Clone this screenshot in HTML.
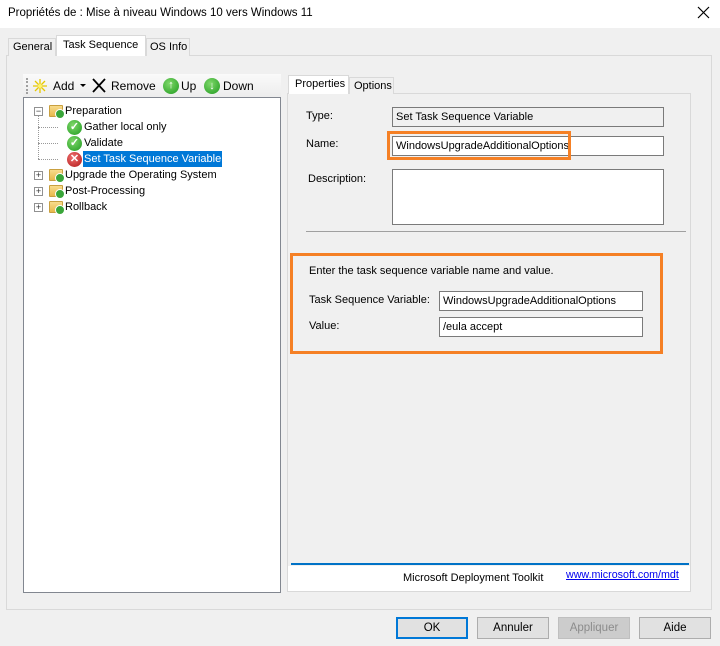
<!DOCTYPE html>
<html><head><meta charset="utf-8"><style>
*{margin:0;padding:0;box-sizing:border-box}
body{width:720px;height:646px;background:#f0f0f0;font-family:"Liberation Sans",sans-serif;font-size:11px;color:#000;position:relative;overflow:hidden}
.a{position:absolute}
.inp{position:absolute;background:#fff;border:1px solid #7a7a7a;padding:3px 0 0 3px;font-size:11px;white-space:nowrap}
.btn{position:absolute;top:617px;width:72px;height:22px;background:#e1e1e1;border:1px solid #adadad;text-align:center;line-height:20px;font-size:11.5px}
.t{position:absolute;white-space:nowrap}
.fold{position:absolute;width:14px;height:12px;background:linear-gradient(#f8dc8c,#e8b84c);border:1px solid #c9a040;border-radius:1px}
.fold:after{content:"";position:absolute;right:-3px;bottom:-3px;width:8px;height:8px;border-radius:50%;background:#3aa63a;border:1px solid #fff}
.pm{position:absolute;width:9px;height:9px;border:1px solid #919191;background:#fff;font-size:9px;line-height:7px;text-align:center;color:#333}
.ok{position:absolute;width:15px;height:15px;border-radius:50%;background:radial-gradient(circle at 40% 35%,#7fd86a,#1f9a1f);color:#fff;font-size:11px;line-height:15px;text-align:center;font-weight:bold}
</style></head><body>
<div class="a" style="left:0;top:0;width:720px;height:28px;background:#fff"></div>
<div class="t" style="left:8px;top:7px;font-size:11.5px">Propriétés de : Mise à niveau Windows 10 vers Windows 11</div>
<svg class="a" style="left:697px;top:6px" width="14" height="14"><path d="M1 1L12 12M12 1L1 12" stroke="#000" stroke-width="1.2"/></svg>

<div class="a" style="left:6px;top:55px;width:706px;height:555px;border:1px solid #d9d9d9;background:#f0f0f0"></div>
<div class="a" style="left:8px;top:38px;width:48px;height:18px;border:1px solid #d9d9d9;border-bottom:none;background:#f0f0f0"></div>
<div class="t" style="left:13px;top:41px">General</div>
<div class="a" style="left:56px;top:35px;width:90px;height:21px;border:1px solid #d9d9d9;border-bottom:none;background:#fff"></div>
<div class="t" style="left:63px;top:39px">Task Sequence</div>
<div class="a" style="left:146px;top:38px;width:44px;height:18px;border:1px solid #d9d9d9;border-bottom:none;background:#f0f0f0"></div>
<div class="t" style="left:150px;top:41px">OS Info</div>
<div class="a" style="left:7px;top:56px;width:704px;height:553px;background:#f0f0f0"></div>

<div class="a" style="left:23px;top:74px;width:258px;height:24px;background:linear-gradient(#fafafa,#ececec)"></div>
<div class="a" style="left:26px;top:78px;width:2px;height:16px;border-left:2px dotted #a0a0a0"></div>
<svg class="a" style="left:32px;top:78px" width="16" height="16"><path d="M8 1V15M1 8H15M3 3L13 13M13 3L3 13" stroke="#e6c800" stroke-width="1.3"/><circle cx="8" cy="8" r="2" fill="#fff36b"/></svg>
<div class="t" style="left:53px;top:79px;font-size:12px">Add</div>
<svg class="a" style="left:80px;top:84px" width="6" height="4"><path d="M0 0H6L3 3z" fill="#000"/></svg>
<svg class="a" style="left:92px;top:78px" width="14" height="15"><path d="M1 1L13 14M13 1L1 14" stroke="#000" stroke-width="1.8"/></svg>
<div class="t" style="left:111px;top:79px;font-size:12px">Remove</div>
<div class="ok" style="left:163px;top:78px;width:16px;height:16px;line-height:15px">↑</div>
<div class="t" style="left:181px;top:79px;font-size:12px">Up</div>
<div class="ok" style="left:204px;top:78px;width:16px;height:16px;line-height:16px">↓</div>
<div class="t" style="left:223px;top:79px;font-size:12px">Down</div>

<div class="a" style="left:23px;top:97px;width:258px;height:496px;background:#fff;border:1px solid #828790"></div>
<div class="a" style="left:38px;top:116px;height:43px;border-left:1px dotted #999"></div>
<div class="a" style="left:38px;top:127px;width:20px;border-top:1px dotted #999"></div>
<div class="a" style="left:38px;top:143px;width:20px;border-top:1px dotted #999"></div>
<div class="a" style="left:38px;top:159px;width:20px;border-top:1px dotted #999"></div>
<div class="pm" style="left:34px;top:107px">−</div>
<div class="fold" style="left:49px;top:105px"></div>
<div class="t" style="left:65px;top:105px">Preparation</div>
<div class="ok" style="left:67px;top:120px">✓</div>
<div class="t" style="left:84px;top:121px">Gather local only</div>
<div class="ok" style="left:67px;top:136px">✓</div>
<div class="t" style="left:84px;top:137px">Validate</div>
<div class="ok" style="left:67px;top:152px;background:radial-gradient(circle at 40% 35%,#f07070,#b01818)">✕</div>
<div class="a" style="left:83px;top:151px;width:139px;height:16px;background:#0078d7"></div>
<div class="t" style="left:84px;top:153px;color:#fff">Set Task Sequence Variable</div>
<div class="pm" style="left:34px;top:171px">+</div>
<div class="fold" style="left:49px;top:169px"></div>
<div class="t" style="left:65px;top:169px">Upgrade the Operating System</div>
<div class="pm" style="left:34px;top:187px">+</div>
<div class="fold" style="left:49px;top:185px"></div>
<div class="t" style="left:65px;top:185px">Post-Processing</div>
<div class="pm" style="left:34px;top:203px">+</div>
<div class="fold" style="left:49px;top:201px"></div>
<div class="t" style="left:65px;top:201px">Rollback</div>

<div class="a" style="left:287px;top:93px;width:404px;height:499px;border:1px solid #d9d9d9;background:#f0f0f0"></div>
<div class="a" style="left:288px;top:566px;width:402px;height:25px;background:#fff"></div>
<div class="a" style="left:291px;top:563px;width:398px;height:2px;background:#0072c6"></div>
<div class="t" style="left:403px;top:572px">Microsoft Deployment Toolkit</div>
<div class="t" style="left:566px;top:569px;color:#0000ee;text-decoration:underline;font-size:10.7px">www.microsoft.com/mdt</div>
<div class="a" style="left:288px;top:75px;width:61px;height:19px;border:1px solid #d9d9d9;border-bottom:none;background:#fff"></div>
<div class="t" style="left:295px;top:78px">Properties</div>
<div class="a" style="left:349px;top:77px;width:45px;height:17px;border:1px solid #d9d9d9;border-bottom:none;background:#f0f0f0"></div>
<div class="t" style="left:354px;top:80px">Options</div>

<div class="t" style="left:306px;top:110px">Type:</div>
<div class="inp" style="left:392px;top:107px;width:272px;height:20px;background:#f0f0f0">Set Task Sequence Variable</div>
<div class="t" style="left:306px;top:138px">Name:</div>
<div class="inp" style="left:392px;top:136px;width:272px;height:20px">WindowsUpgradeAdditionalOptions</div>
<div class="a" style="left:387px;top:131px;width:184px;height:29px;border:3px solid #f58025"></div>
<div class="t" style="left:308px;top:173px">Description:</div>
<div class="inp" style="left:392px;top:169px;width:272px;height:56px"></div>
<div class="a" style="left:306px;top:231px;width:380px;border-top:1px solid #a0a0a0"></div>

<div class="a" style="left:290px;top:253px;width:373px;height:101px;border:3px solid #f58025"></div>
<div class="t" style="left:309px;top:265px">Enter the task sequence variable name and value.</div>
<div class="t" style="left:309px;top:294px">Task Sequence Variable:</div>
<div class="inp" style="left:439px;top:291px;width:204px;height:20px">WindowsUpgradeAdditionalOptions</div>
<div class="t" style="left:309px;top:320px">Value:</div>
<div class="inp" style="left:439px;top:317px;width:204px;height:20px">/eula accept</div>

<div class="btn" style="left:396px;border:2px solid #0078d7;line-height:18px">OK</div>
<div class="btn" style="left:477px">Annuler</div>
<div class="btn" style="left:558px;background:#cccccc;border-color:#bfbfbf;color:#8c8c8c">Appliquer</div>
<div class="btn" style="left:639px">Aide</div>
</body></html>
